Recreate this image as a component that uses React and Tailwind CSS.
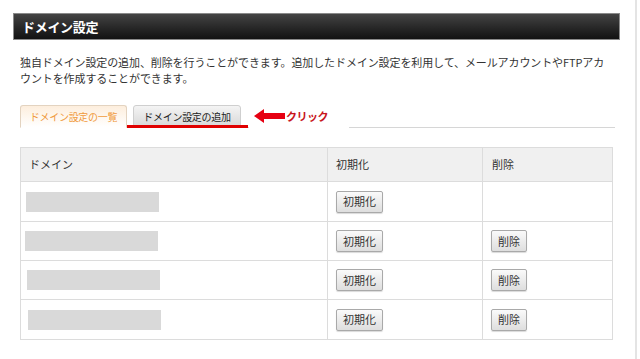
import React from "react";

const rows = [
  { bar: "ml-[5px] w-[133px]", h: "h-[40px]", del: false },
  { bar: "ml-[4px] w-[133px]", h: "h-[39px]", del: true },
  { bar: "ml-[6px] w-[133px]", h: "h-[39px]", del: true },
  { bar: "ml-[7px] w-[133px]", h: "h-[39px]", del: true },
];

function Btn({ children, w }) {
  return (
    <button
      className={`${w} h-[22px] rounded-[2px] border border-[#a9a9a9] bg-gradient-to-b from-[#fafafa] to-[#dedede] text-[11px] text-[#333] shadow-[0_1px_1px_rgba(0,0,0,0.15)]`}
    >
      {children}
    </button>
  );
}

export default function App() {
  return (
    <div
      className="w-[640px] h-[359px] bg-white overflow-hidden flex"
      style={{ fontFamily: '"Noto Sans CJK JP", "Noto Sans", sans-serif' }}
    >
      <div className="w-[635px] pt-[13px] pl-[13px]">
        {/* title bar */}
        <div className="w-[607px] h-[27px] border border-[#8a8a8a] bg-gradient-to-b from-[#444] to-[#121212] flex items-center pl-[8px]">
          <span className="text-white font-bold text-[13px] tracking-[-0.3px]">ドメイン設定</span>
        </div>

        <div className="pl-[7px] w-[600px]">
          {/* description */}
          <p className="mt-[14px] text-[11px] leading-[16px] text-[#333] tracking-[-0.1px]">
            独自ドメイン設定の追加、削除を行うことができます。追加したドメイン設定を利用して、メールアカウントやFTPアカ
            <br />
            ウントを作成することができます。
          </p>

          {/* tabs */}
          <div className="relative mt-[19px] w-[595px] h-[23px] border-b border-[#d6d6d6] flex items-end gap-[6px]">
            <div className="w-[107px] h-[23px] -mb-px rounded-t-[3px] border border-[#e3d3c0] border-b-white bg-gradient-to-b from-[#fdeedd] to-white flex items-center justify-center text-[10px] text-[#f09a3c] tracking-[-0.3px]">
              ドメイン設定の一覧
            </div>
            <div className="w-[108px] h-[22px] rounded-t-[3px] border border-[#cfcfcf] bg-gradient-to-b from-[#f4f4f4] to-[#d9d9d9] flex items-center justify-center text-[10px] text-[#222] tracking-[-0.3px]">
              ドメイン設定の追加
            </div>
            {/* annotation */}
            <div className="absolute left-[107px] top-[20px] w-[121px] h-[3px] bg-[#e00000]" />
            <div className="absolute left-[229px] top-[-2px] w-[100px] h-[26px] bg-white flex items-center">
              <svg width="32" height="16" viewBox="0 0 32 16" className="ml-[5px]">
                <polygon points="0,8 10,1 10,5 31,5 31,11 10,11 10,15" fill="#e60012" />
              </svg>
              <span className="text-[11px] font-bold text-[#c8161d] tracking-[-0.5px]">クリック</span>
            </div>
          </div>

          {/* table */}
          <div className="mt-[19px] w-[593px] border border-[#dcdcdc] text-[11px] text-[#333]">
            <div className="flex h-[34px] bg-[#f0f0f0] border-b border-[#dcdcdc]">
              <div className="w-[307px] border-r border-[#dcdcdc] flex items-center pl-[8px]">ドメイン</div>
              <div className="w-[155px] border-r border-[#dcdcdc] flex items-center pl-[8px]">初期化</div>
              <div className="flex-1 flex items-center pl-[9px]">削除</div>
            </div>
            {rows.map((r, i) => (
              <div
                key={i}
                className={`flex ${r.h} ${i < rows.length - 1 ? "border-b border-[#dcdcdc]" : ""}`}
              >
                <div className="w-[307px] border-r border-[#dcdcdc] flex items-center">
                  <div className={`${r.bar} h-[20px] bg-[#d9d9d9]`} />
                </div>
                <div className="w-[155px] border-r border-[#dcdcdc] flex items-center pl-[8px]">
                  <Btn w="w-[47px]">初期化</Btn>
                </div>
                <div className="flex-1 flex items-center pl-[8px]">
                  {r.del && <Btn w="w-[36px]">削除</Btn>}
                </div>
              </div>
            ))}
          </div>
        </div>
      </div>
      <div className="w-[2px] h-full bg-[#e4e4e4]" />
    </div>
  );
}
